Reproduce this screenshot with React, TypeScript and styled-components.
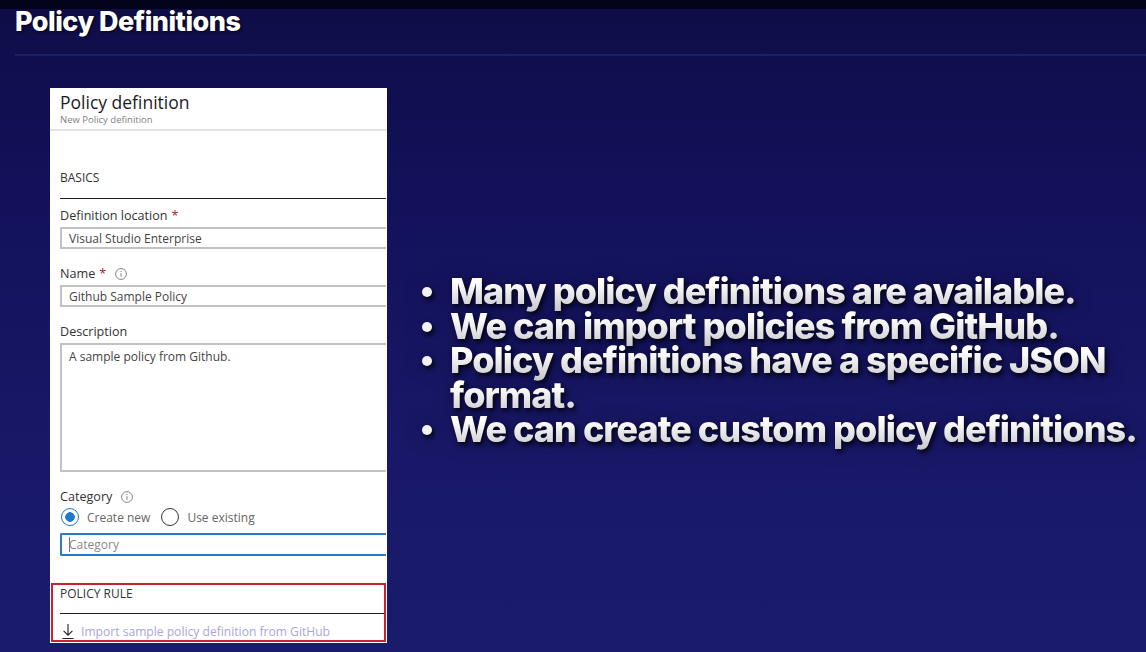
import styled, { createGlobalStyle } from 'styled-components';

const GlobalStyle = createGlobalStyle`
    html, body {
        margin: 0;
        padding: 0;
        background: #14125a;
    }

    * {
        box-sizing: border-box;
    }
`;

const bullets = [
    'Many policy definitions are available.',
    'We can import policies from GitHub.',
    'Policy definitions have a specific JSON format.',
    'We can create custom policy definitions.',
];

const InfoIcon = () => (
    <svg width="12" height="12" viewBox="0 0 12 12" fill="none" stroke="#777" strokeWidth="0.9">
        <circle cx="6" cy="6" r="5.4" />
        <path d="M6 5.2v3.6M6 3v1" />
    </svg>
);

const ImportIcon = () => (
    <svg width="14" height="17" viewBox="0 0 14 17" fill="none" stroke="#222" strokeWidth="1.1">
        <path d="M7 1v11M2.6 7.8 7 12.2l4.4-4.4M1.5 15.5h11" />
    </svg>
);

const App = () => {
    return (
        <Slide>
            <GlobalStyle />
            <TopBar />
            <Header>
                <Title>Policy Definitions</Title>
                <Divider />
            </Header>
            <Content>
                <Panel>
                    <PanelHeader>
                        <PanelTitle>Policy definition</PanelTitle>
                        <PanelSubtitle>New Policy definition</PanelSubtitle>
                    </PanelHeader>
                    <PanelBody>
                        <SectionTitle>BASICS</SectionTitle>
                        <FirstField>
                            <Label>
                                Definition location <Star>*</Star>
                            </Label>
                            <Input>Visual Studio Enterprise</Input>
                        </FirstField>
                        <Field>
                            <Label>
                                Name <Star>*</Star>
                                <InfoIcon />
                            </Label>
                            <Input>Github Sample Policy</Input>
                        </Field>
                        <Field>
                            <Label>Description</Label>
                            <TextArea>A sample policy from Github.</TextArea>
                        </Field>
                        <Field>
                            <Label>
                                Category
                                <InfoIcon />
                            </Label>
                            <RadioRow>
                                <Radio $checked />
                                <RadioLabel>Create new</RadioLabel>
                                <Radio />
                                <RadioLabel>Use existing</RadioLabel>
                            </RadioRow>
                            <FocusedInput>
                                <Caret />
                                Category
                            </FocusedInput>
                        </Field>
                    </PanelBody>
                    <PolicyRule>
                        <RuleTitle>POLICY RULE</RuleTitle>
                        <ImportRow>
                            <ImportIcon />
                            <ImportLink>Import sample policy definition from GitHub</ImportLink>
                        </ImportRow>
                    </PolicyRule>
                </Panel>
                <BulletList>
                    {bullets.map((text) => (
                        <Bullet key={text}>
                            <Dot />
                            <BulletText>
                                <GradientText>{text}</GradientText>
                            </BulletText>
                        </Bullet>
                    ))}
                </BulletList>
            </Content>
        </Slide>
    );
};

const Slide = styled.div`
    width: 1146px;
    height: 652px;
    overflow: hidden;
    display: flex;
    flex-direction: column;
    background: linear-gradient(180deg, #0f0d47 0%, #13115a 30%, #191868 70%, #1b1b6c 100%);
    font-family: 'Open Sans', 'Noto Sans', sans-serif;
`;

const TopBar = styled.div`
    height: 9px;
    flex: none;
    background: #03031c;
`;

const Header = styled.div`
    padding-left: 15px;
    flex: none;
`;

const Title = styled.div`
    height: 27px;
    line-height: 26px;
    font-family: Inter, sans-serif;
    font-size: 27px;
    font-weight: 800;
    letter-spacing: -0.5px;
    color: #fff;
    text-shadow: 1px 1px 3px rgba(0, 0, 0, 0.75);
`;

const Divider = styled.div`
    height: 2px;
    margin-top: 18px;
    background: #1c2060;
`;

const Content = styled.div`
    flex: 1;
    display: flex;
    padding: 32px 0 0 50px;
`;

const Panel = styled.div`
    width: 337px;
    height: 555px;
    flex: none;
    display: flex;
    flex-direction: column;
    background: #fff;
    color: #222;
`;

const PanelHeader = styled.div`
    height: 43px;
    padding: 3px 0 0 10px;
    border-bottom: 2px solid #e2e2e2;
`;

const PanelTitle = styled.div`
    font-size: 17.5px;
    line-height: 22px;
    color: #1c1c1c;
`;

const PanelSubtitle = styled.div`
    font-size: 9.5px;
    line-height: 12px;
    margin-top: 1px;
    color: #808080;
`;

const PanelBody = styled.div`
    flex: 1;
    padding: 38px 1px 0 10px;
`;

const SectionTitle = styled.div`
    height: 30px;
    line-height: 17px;
    font-size: 12px;
    color: #333;
    border-bottom: 1px solid #222;
`;

const Field = styled.div`
    margin-top: 16px;
`;

const FirstField = styled(Field)`
    margin-top: 8px;
`;

const Label = styled.div`
    display: flex;
    align-items: center;
    height: 17px;
    font-size: 12.6px;
    color: #333;

    svg {
        margin-left: 9px;
    }
`;

const Star = styled.span`
    color: #a4262c;
    margin-left: 4px;
`;

const Input = styled.div`
    height: 22px;
    line-height: 19px;
    padding-left: 7px;
    margin-top: 3px;
    font-size: 12px;
    color: #444;
    border: 2px solid #c2c2c2;
    border-right: none;
`;

const TextArea = styled(Input)`
    height: 129px;
    padding-top: 2px;
`;

const RadioRow = styled.div`
    display: flex;
    align-items: center;
    height: 24px;
    padding-left: 1px;
`;

const Radio = styled.span<{ $checked?: boolean }>`
    width: 18px;
    height: 18px;
    flex: none;
    border-radius: 50%;
    border: 1px solid ${(p) => (p.$checked ? '#1f78c8' : '#333')};
    background: ${(p) => (p.$checked ? 'radial-gradient(circle, #1f78c8 0 4.5px, #fff 5px)' : '#fff')};
`;

const RadioLabel = styled.span`
    margin: 0 11px 0 8px;
    font-size: 12px;
    color: #666;
`;

const FocusedInput = styled(Input)`
    display: flex;
    align-items: center;
    height: 23px;
    margin-top: 4px;
    color: #888;
    border-color: #2b7cc4;
    border-right: none;
    border-radius: 2px 0 0 2px;
`;

const Caret = styled.span`
    width: 1px;
    height: 15px;
    flex: none;
    margin-right: -1px;
    background: #777;
`;

const PolicyRule = styled.div`
    height: 59px;
    margin: 0 1px 1px 1px;
    padding-left: 7px;
    border: 2px solid #c8232c;
`;

const RuleTitle = styled.div`
    height: 29px;
    line-height: 18px;
    font-size: 12px;
    color: #333;
    border-bottom: 1px solid #222;
`;

const ImportRow = styled.div`
    display: flex;
    align-items: center;
    gap: 6px;
    height: 26px;
    padding: 8px 0 0 1px;
`;

const ImportLink = styled.span`
    font-size: 12.1px;
    color: #a9a5dc;
`;

const BulletList = styled.ul`
    list-style: none;
    width: 724px;
    margin: 186px 0 0 35px;
    padding: 0;
    filter: drop-shadow(2px 3px 2px rgba(0, 0, 0, 0.75)) drop-shadow(0 0 8px rgba(5, 5, 40, 0.5));
`;

const Bullet = styled.li`
    display: flex;
    align-items: flex-start;
`;

const Dot = styled.span`
    width: 10px;
    height: 10px;
    flex: none;
    margin: 13px 18px 0 0;
    border-radius: 50%;
    background: #f2f2f2;
`;

const BulletText = styled.div`
    font-family: Inter, sans-serif;
    font-size: 36px;
    font-weight: 800;
    line-height: 34.5px;
    letter-spacing: -0.95px;
`;

const GradientText = styled.span`
    -webkit-box-decoration-break: clone;
    box-decoration-break: clone;
    background: linear-gradient(180deg, #ffffff 30%, #c4c4c8 100%);
    -webkit-background-clip: text;
    background-clip: text;
    color: transparent;
`;

export default App;
